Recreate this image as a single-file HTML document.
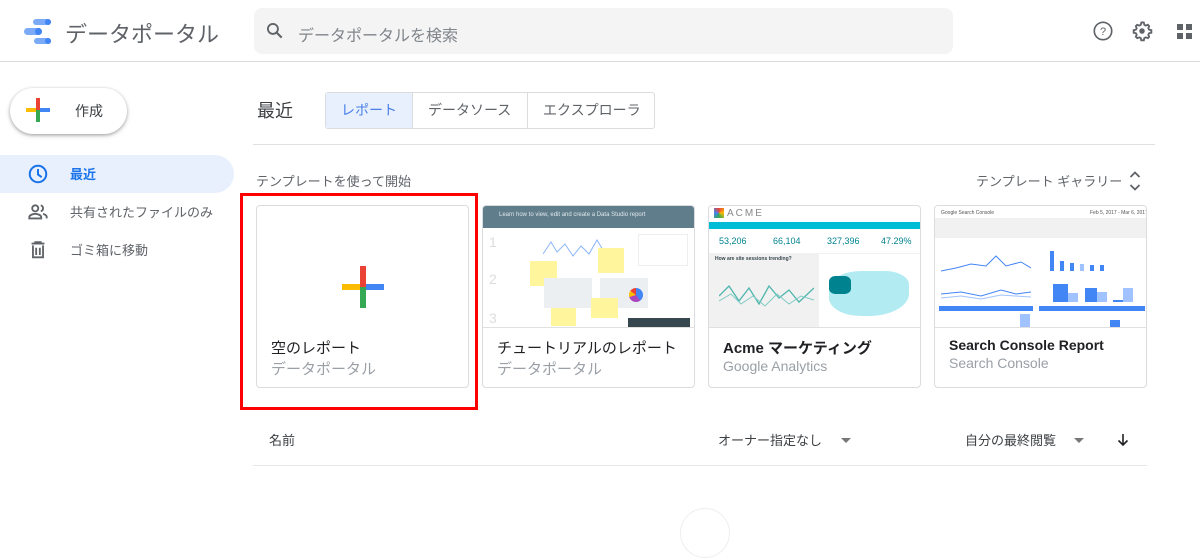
<!DOCTYPE html>
<html><head><meta charset="utf-8"><style>
*{box-sizing:border-box;margin:0;padding:0}
body{width:1200px;height:513px;overflow:hidden;background:#fff;font-family:"Liberation Sans","Noto Sans CJK JP",sans-serif;color:#3c4043;position:relative}
.a{position:absolute;white-space:nowrap}
.card{position:absolute;top:205px;width:213px;height:183px;border:1px solid #dadce0;border-radius:4px;overflow:hidden;background:#fff}
.thumb{position:absolute;left:0;top:0;width:100%;height:122px;border-bottom:1px solid #e0e0e0;overflow:hidden}
.t1{position:absolute;left:14px;top:131px;font-size:15px;color:#202124}
.t2{position:absolute;left:14px;top:152px;font-size:15px;color:#9aa0a6}
</style></head><body>
<!-- header -->
<div class="a" style="left:0;top:61px;width:1200px;height:1px;background:#dadce0"></div>
<div class="a" style="left:33px;top:19px;width:18px;height:6px;border-radius:3px;background:#7baaf7"></div>
<div class="a" style="left:45px;top:19px;width:6px;height:6px;border-radius:3px;background:#4285f4"></div>
<div class="a" style="left:24px;top:28px;width:18px;height:7px;border-radius:3.5px;background:#7baaf7"></div>
<div class="a" style="left:35px;top:28px;width:7px;height:7px;border-radius:3.5px;background:#4285f4"></div>
<div class="a" style="left:34px;top:38px;width:17px;height:6px;border-radius:3px;background:#7baaf7"></div>
<div class="a" style="left:45px;top:38px;width:6px;height:6px;border-radius:3px;background:#4285f4"></div>
<div class="a" style="left:65px;top:17px;font-size:22px;color:#5f6368">データポータル</div>
<div class="a" style="left:254px;top:8px;width:699px;height:46px;border-radius:8px;background:#f4f4f4"></div>
<svg class="a" style="left:265px;top:21px" width="20" height="20" viewBox="0 0 24 24"><circle cx="9.5" cy="9.5" r="6" fill="none" stroke="#5f6368" stroke-width="2.2"/><path d="M14 14l6 6" stroke="#5f6368" stroke-width="2.5"/></svg>
<div class="a" style="left:298px;top:22px;font-size:16px;color:#80868b">データポータルを検索</div>
<svg class="a" style="left:1092px;top:20px" width="22" height="22" viewBox="0 0 24 24"><circle cx="12" cy="12" r="9.5" fill="none" stroke="#5f6368" stroke-width="1.8"/><text x="12" y="16.5" font-size="12" text-anchor="middle" fill="#5f6368" font-family="Liberation Sans">?</text></svg>
<svg class="a" style="left:1131px;top:20px" width="22" height="22" viewBox="0 0 24 24"><path d="M12 2.5l2 .3.5 2.4 1.6.9 2.3-.9 1.4 1.5-.9 2.3.9 1.6 2.4.5v2.8l-2.4.5-.9 1.6.9 2.3-1.4 1.5-2.3-.9-1.6.9-.5 2.4h-2.8l-.5-2.4-1.6-.9-2.3.9-1.5-1.5.9-2.3-.9-1.6-2.4-.5v-2.8l2.4-.5.9-1.6-.9-2.3 1.5-1.5 2.3.9 1.6-.9.5-2.4z" fill="none" stroke="#5f6368" stroke-width="2"/><circle cx="12" cy="12" r="3" fill="#5f6368"/></svg>
<div class="a" style="left:1177px;top:24px;width:6px;height:6px;background:#5f6368"></div>
<div class="a" style="left:1186px;top:24px;width:6px;height:6px;background:#5f6368"></div>
<div class="a" style="left:1177px;top:33px;width:6px;height:6px;background:#5f6368"></div>
<div class="a" style="left:1186px;top:33px;width:6px;height:6px;background:#5f6368"></div>
<!-- sidebar -->
<div class="a" style="left:10px;top:88px;width:117px;height:46px;border-radius:23px;background:#fff;box-shadow:0 1px 3px rgba(0,0,0,.3),0 2px 6px rgba(0,0,0,.12)"></div>
<div class="a" style="left:26px;top:108px;width:12px;height:4px;background:#fbbc04"></div>
<div class="a" style="left:38px;top:108px;width:12px;height:4px;background:#4285f4"></div>
<div class="a" style="left:36px;top:98px;width:4px;height:12px;background:#ea4335"></div>
<div class="a" style="left:36px;top:110px;width:4px;height:12px;background:#34a853"></div>
<div class="a" style="left:75px;top:101px;font-size:14px;color:#3c4043">作成</div>
<div class="a" style="left:0;top:155px;width:234px;height:38px;border-radius:0 19px 19px 0;background:#e8f0fe"></div>
<svg class="a" style="left:27px;top:163px" width="22" height="22" viewBox="0 0 24 24"><circle cx="12" cy="12" r="9" fill="none" stroke="#1a73e8" stroke-width="2.2"/><path d="M12 6.5v6l4 3" fill="none" stroke="#1a73e8" stroke-width="2.2"/></svg>
<div class="a" style="left:70px;top:164px;font-size:13px;font-weight:bold;color:#1a73e8">最近</div>
<svg class="a" style="left:27px;top:201px" width="22" height="22" viewBox="0 0 24 24"><circle cx="9" cy="8" r="3.3" fill="none" stroke="#5f6368" stroke-width="2"/><path d="M2.5 19v-1.5c0-2 4-3.5 6.5-3.5s6.5 1.5 6.5 3.5V19z" fill="none" stroke="#5f6368" stroke-width="2"/><path d="M15 4.8a3.3 3.3 0 010 6.4M17.5 14c2 .6 4 1.7 4 3.5V19" fill="none" stroke="#5f6368" stroke-width="2"/></svg>
<div class="a" style="left:70px;top:202px;font-size:13px;color:#5f6368">共有されたファイルのみ</div>
<svg class="a" style="left:27px;top:239px" width="22" height="22" viewBox="0 0 24 24"><path d="M5 5h14M9 5V3.5h6V5M6.5 7v13h11V7M10 9.5v8M14 9.5v8" fill="none" stroke="#5f6368" stroke-width="2"/></svg>
<div class="a" style="left:70px;top:240px;font-size:13px;color:#5f6368">ゴミ箱に移動</div>
<!-- main -->
<div class="a" style="left:257px;top:97px;font-size:18px;color:#3c4043">最近</div>
<div class="a" style="left:325px;top:92px;width:330px;height:37px;border:1px solid #dadce0;border-radius:3px"></div>
<div class="a" style="left:326px;top:93px;width:87px;height:35px;background:#e8f0fe;border-right:1px solid #dadce0"></div>
<div class="a" style="left:527px;top:93px;width:1px;height:35px;background:#dadce0"></div>
<div class="a" style="left:341px;top:100px;font-size:14px;color:#4a80e8">レポート</div>
<div class="a" style="left:428px;top:100px;font-size:14px;color:#5f6368">データソース</div>
<div class="a" style="left:543px;top:100px;font-size:14px;color:#5f6368">エクスプローラ</div>
<div class="a" style="left:253px;top:144px;width:902px;height:1px;background:#e0e0e0"></div>
<div class="a" style="left:256px;top:171px;font-size:13px;color:#5f6368">テンプレートを使って開始</div>
<div class="a" style="left:976px;top:171px;font-size:13px;color:#5f6368">テンプレート ギャラリー</div>
<svg class="a" style="left:1128px;top:170px" width="14" height="22" viewBox="0 0 14 22"><path d="M2.5 7L7 2.5 11.5 7M2.5 15L7 19.5 11.5 15" fill="none" stroke="#5f6368" stroke-width="1.8"/></svg>
<!-- cards -->
<div class="card" style="left:256px">
 <div class="a" style="left:85px;top:78px;width:21px;height:6px;background:#fbbc04"></div>
 <div class="a" style="left:106px;top:78px;width:21px;height:6px;background:#4285f4"></div>
 <div class="a" style="left:103px;top:60px;width:6px;height:21px;background:#ea4335"></div>
 <div class="a" style="left:103px;top:81px;width:6px;height:21px;background:#34a853"></div>
 <div class="t1">空のレポート</div><div class="t2">データポータル</div>
</div>
<div class="a" style="left:240px;top:193px;width:238px;height:217px;border:3px solid #f00"></div>
<div class="card" style="left:482px">
 <div class="thumb" style="background:#fff">
  <div class="a" style="left:0;top:0;width:213px;height:22px;background:#607d8b"></div>
  <div class="a" style="left:16px;top:6px;font-size:6px;color:#e0e8ec">Learn how to view, edit and create a Data Studio report</div>
  <div class="a" style="left:6px;top:28px;font-size:14px;color:#ddd">1</div>
  <div class="a" style="left:6px;top:65px;font-size:14px;color:#ddd">2</div>
  <div class="a" style="left:6px;top:104px;font-size:14px;color:#ddd">3</div>
  <svg class="a" style="left:60px;top:28px" width="60" height="30"><path d="M0 20L8 8 14 18 22 10 30 22 38 12 46 20 54 6 60 16" fill="none" stroke="#8ab4f8" stroke-width="1"/></svg>
  <div class="a" style="left:47px;top:55px;width:27px;height:25px;background:#fff59d"></div>
  <div class="a" style="left:115px;top:42px;width:26px;height:25px;background:#fff59d"></div>
  <div class="a" style="left:155px;top:28px;width:50px;height:32px;border:1px solid #eee"></div>
  <div class="a" style="left:61px;top:72px;width:48px;height:30px;background:#eceff1"></div>
  <div class="a" style="left:117px;top:72px;width:48px;height:30px;background:#eceff1"></div>
  <div class="a" style="left:146px;top:82px;width:14px;height:14px;border-radius:50%;background:conic-gradient(#4285f4 0 40%,#ab47bc 0 70%,#fbbc04 0 85%,#ea4335 0)"></div>
  <div class="a" style="left:68px;top:102px;width:25px;height:18px;background:#fff59d"></div>
  <div class="a" style="left:108px;top:92px;width:27px;height:20px;background:#fff59d"></div>
  <div class="a" style="left:145px;top:112px;width:62px;height:10px;background:#37474f"></div>
 </div>
 <div class="t1">チュートリアルのレポート</div><div class="t2">データポータル</div>
</div>
<div class="card" style="left:708px">
 <div class="thumb" style="background:#f1f1f1">
  <div class="a" style="left:0;top:0;width:213px;height:16px;background:#fff"></div>
  <div class="a" style="left:5px;top:2px;width:10px;height:10px;background:conic-gradient(#ea4335,#fbbc04,#34a853,#4285f4,#ea4335)"></div>
  <div class="a" style="left:18px;top:2px;font-size:10px;color:#888;letter-spacing:2px">ACME</div>
  <div class="a" style="left:0;top:16px;width:213px;height:7px;background:#00bcd4"></div>
  <div class="a" style="left:0;top:23px;width:213px;height:24px;background:#fff"></div>
  <div class="a" style="left:10px;top:30px;font-size:9px;color:#00838f">53,206</div>
  <div class="a" style="left:64px;top:30px;font-size:9px;color:#00838f">66,104</div>
  <div class="a" style="left:118px;top:30px;font-size:9px;color:#00838f">327,396</div>
  <div class="a" style="left:172px;top:30px;font-size:9px;color:#00838f">47.29%</div>
  <div class="a" style="left:6px;top:50px;font-size:5px;color:#37474f;font-weight:bold">How are site sessions trending?</div>
  <div class="a" style="left:116px;top:50px;font-size:5px;color:#37474f;font-weight:bold">What are the top countries by sessions?</div>
  <div class="a" style="left:110px;top:48px;width:103px;height:74px;background:#fff"></div>
  <svg class="a" style="left:10px;top:70px" width="95" height="40"><path d="M0 20L10 10 20 25 30 12 40 28 50 10 60 22 70 14 80 26 95 12" fill="none" stroke="#4db6ac" stroke-width="1.3"/><path d="M0 25L12 18 22 28 34 20 46 30 58 18 70 28 82 20 95 24" fill="none" stroke="#80cbc4" stroke-width="1"/></svg>
  <div class="a" style="left:120px;top:65px;width:80px;height:45px;border-radius:40% 30% 50% 40%;background:#b2ebf2"></div>
  <div class="a" style="left:120px;top:70px;width:22px;height:18px;background:#00838f;border-radius:30%"></div>
 </div>
 <div class="t1" style="font-weight:bold">Acme マーケティング</div><div class="t2" style="font-size:14px">Google Analytics</div>
</div>
<div class="card" style="left:934px">
 <div class="thumb" style="background:#fff">
  <div class="a" style="left:6px;top:4px;font-size:5px;color:#555">Google Search Console</div>
  <div class="a" style="left:155px;top:4px;font-size:5px;color:#555">Feb 5, 2017 - Mar 6, 2017</div>
  <div class="a" style="left:0;top:12px;width:213px;height:20px;background:#f1f1f1"></div>
  <svg class="a" style="left:6px;top:40px" width="90" height="30"><path d="M0 25L15 22 30 18 45 20 55 10 65 20 80 16 90 22" fill="none" stroke="#4285f4" stroke-width="1"/></svg>
  <svg class="a" style="left:6px;top:78px" width="90" height="20"><path d="M0 10L20 8 40 12 60 6 75 10 90 8" fill="none" stroke="#4285f4" stroke-width="1"/><path d="M0 14L20 12 40 15 60 11 90 13" fill="none" stroke="#a0c3ff" stroke-width="1"/></svg>
  <div class="a" style="left:115px;top:45px;width:4px;height:20px;background:#4285f4"></div>
  <div class="a" style="left:125px;top:55px;width:4px;height:10px;background:#4285f4"></div>
  <div class="a" style="left:135px;top:57px;width:4px;height:8px;background:#4285f4"></div>
  <div class="a" style="left:145px;top:58px;width:4px;height:7px;background:#a0c3ff"></div>
  <div class="a" style="left:155px;top:59px;width:4px;height:6px;background:#4285f4"></div>
  <div class="a" style="left:165px;top:59px;width:4px;height:6px;background:#4285f4"></div>
  <div class="a" style="left:118px;top:78px;width:15px;height:18px;background:#4285f4"></div>
  <div class="a" style="left:133px;top:87px;width:10px;height:9px;background:#a0c3ff"></div>
  <div class="a" style="left:150px;top:82px;width:12px;height:14px;background:#4285f4"></div>
  <div class="a" style="left:162px;top:86px;width:10px;height:10px;background:#a0c3ff"></div>
  <div class="a" style="left:178px;top:94px;width:10px;height:2px;background:#4285f4"></div>
  <div class="a" style="left:188px;top:82px;width:10px;height:14px;background:#a0c3ff"></div>
  <div class="a" style="left:4px;top:100px;width:94px;height:5px;background:#4285f4"></div>
  <div class="a" style="left:104px;top:100px;width:106px;height:5px;background:#4285f4"></div>
  <div class="a" style="left:85px;top:108px;width:10px;height:14px;background:#a0c3ff"></div>
  <div class="a" style="left:175px;top:114px;width:10px;height:8px;background:#4285f4"></div>
 </div>
 <div class="t1" style="font-weight:bold;font-size:14px">Search Console Report</div><div class="t2" style="font-size:14px;top:149px">Search Console</div>
</div>
<!-- list header -->
<div class="a" style="left:269px;top:430px;font-size:13px;color:#3c4043">名前</div>
<div class="a" style="left:718px;top:430px;font-size:13px;color:#3c4043">オーナー指定なし</div>
<div class="a" style="left:841px;top:438px;border-left:5px solid transparent;border-right:5px solid transparent;border-top:5px solid #777"></div>
<div class="a" style="left:965px;top:430px;font-size:13px;color:#3c4043">自分の最終閲覧</div>
<div class="a" style="left:1074px;top:438px;border-left:5px solid transparent;border-right:5px solid transparent;border-top:5px solid #777"></div>
<svg class="a" style="left:1117px;top:433px" width="12" height="14" viewBox="0 0 12 14"><path d="M6 1v11M1.5 7.5L6 12l4.5-4.5" fill="none" stroke="#202124" stroke-width="1.6"/></svg>
<div class="a" style="left:253px;top:465px;width:894px;height:1px;background:#e8e8e8"></div>
<div class="a" style="left:680px;top:508px;width:50px;height:50px;border-radius:50%;border:1px solid #eee"></div>
</body></html>
